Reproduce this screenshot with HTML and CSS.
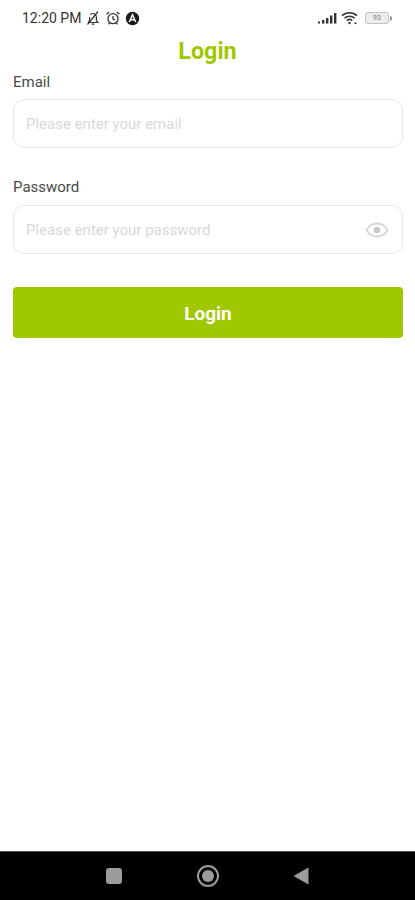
FILE: index.html
```html
<!DOCTYPE html>
<html lang="en">
<head>
<meta charset="utf-8">
<title>Login</title>
<link rel="stylesheet" href="styles.css">
</head>
<body>
<div class="screen">
  <div class="status">
    <div class="status-left">
      <span class="time">12:20 PM</span>
      <svg class="si" width="16" height="16" viewBox="0 0 16 16" fill="none" stroke="#333" stroke-width="1.2"><path d="M3 12.500h10l-1.600-2V7a3.500 3.500 0 0 0-6-2.400M4.600 7v3.500L3 12.500M6.700 14.200h2.600M2.500 14.500 13 1.500"/></svg>
      <svg class="si" width="16" height="16" viewBox="0 0 16 16" fill="none" stroke="#333" stroke-width="1.3"><circle cx="8" cy="8.700" r="5"/><path d="M8 6v3l2 1M1.600 4.300 4.200 2M14.400 4.300 11.800 2M4.500 13l-1 1.300M11.500 13l1 1.300"/></svg>
      <svg class="si" width="15" height="15" viewBox="0 0 15 15"><circle cx="7.500" cy="7.500" r="6.700" fill="#1c1c1c"/><path d="M4.300 11 7.500 3.800 10.700 11M5.600 8.800h3.800" fill="none" stroke="#fff" stroke-width="1.500"/></svg>
    </div>
    <div class="status-right">
      <svg width="19" height="12" viewBox="0 0 19 12" fill="#333"><rect x="0" y="9.500" width="2" height="2"/><rect x="4" y="8" width="2.400" height="3.500"/><rect x="8" y="6" width="2.400" height="5.500"/><rect x="12" y="3.500" width="2.400" height="8"/><rect x="16" y="1" width="2.400" height="10.500"/></svg>
      <svg class="wifi" width="18" height="14" viewBox="0 0 18 14" fill="none" stroke="#333" stroke-width="1.500"><path d="M1 4.600a11 11 0 0 1 15 0M3.400 7.200a7.600 7.600 0 0 1 10.200 0M5.800 9.600a4 4 0 0 1 5.400 0"/><circle cx="8.500" cy="12" r="1.200" fill="#333" stroke="none"/><circle cx="14.500" cy="12.300" r="1" fill="#333" stroke="none"/></svg>
      <div class="battery"><div class="battery-body">93</div><div class="battery-tip"></div></div>
    </div>
  </div>

  <h1 class="title">Login</h1>

  <form class="form">
    <div class="field">
      <label class="label">Email</label>
      <div class="input"><span class="placeholder">Please enter your email</span></div>
    </div>
    <div class="field">
      <label class="label">Password</label>
      <div class="input">
        <span class="placeholder">Please enter your password</span>
        <svg class="eye" width="24" height="24" viewBox="0 0 24 24" fill="none"><path d="M1.500 12C4 7.600 7.700 5.500 12 5.500s8 2.100 10.500 6.500c-2.500 4.400-6.200 6.500-10.500 6.500S4 16.400 1.500 12Z" stroke="#d6d6d6" stroke-width="1.800"/><circle cx="12" cy="12" r="3.300" fill="#c8c8c8"/></svg>
      </div>
    </div>
    <div class="button">Login</div>
  </form>

  <div class="spacer"></div>

  <div class="nav">
    <span class="nav-square"></span>
    <span class="nav-circle"><span class="nav-dot"></span></span>
    <svg width="16" height="18" viewBox="0 0 16 18"><path d="M15.500 0.500V17.500L0.500 9Z" fill="#9c9c9c"/></svg>
  </div>
</div>
</body>
</html>
```
FILE: styles.css
```css
* { box-sizing: border-box; }
html, body { margin: 0; padding: 0; background: #fff; }
body { font-family: Roboto, "Liberation Sans", sans-serif; }
.screen { width: 415px; height: 900px; display: flex; flex-direction: column; overflow: hidden; }
.status { height: 36px; flex: none; display: flex; justify-content: space-between; align-items: center; padding: 0 23px 0 22px; }
.status-left { display: flex; align-items: center; gap: 4px; }
.time { font-size: 14px; color: #333; }
.si { display: block; }
.status-right { display: flex; align-items: center; gap: 5px; }
.wifi { margin-left: -1px; margin-right: 1px; }
.battery { display: flex; align-items: center; }
.battery-body { width: 24px; height: 12px; border: 1px solid #c4c4c4; border-radius: 3px; font-size: 7px; line-height: 10px; color: #777; text-align: center; background: #ececec; }
.battery-tip { width: 2px; height: 5px; background: #999; margin-left: 1px; border-radius: 0 2px 2px 0; }
.title { margin: 0; height: 30px; flex: none; font-size: 23.300px; font-weight: 700; line-height: 30px; text-align: center; color: #a0c800; }
.form { flex: none; padding: 0 12px 0 13px; display: flex; flex-direction: column; }
.field { display: flex; flex-direction: column; margin-bottom: 24px; }
.field + .field { margin-bottom: 33px; }
.label { height: 33px; padding-top: 6px; font-size: 15px; line-height: 20px; color: #4a4a4a; }
.field + .field .label { padding-top: 5px; }
.input { height: 49px; border: 1.500px solid #e6e6e6; border-radius: 11px; display: flex; align-items: center; justify-content: space-between; padding: 1px 13px 0 12px; }
.placeholder { font-size: 15px; color: #d8d8d8; }
.eye { display: block; }
.button { height: 51px; padding-top: 1px; background: #a0c800; border-radius: 4px; display: flex; align-items: center; justify-content: center; color: #fff; font-size: 19px; font-weight: 700; }
.spacer { flex: 1; }
.nav { height: 49px; flex: none; background: #000; border-top: 1px solid #555; display: flex; align-items: center; justify-content: space-between; padding: 0 106px; }
.nav-square { width: 16px; height: 16px; border-radius: 3px; background: #9c9c9c; }
.nav-circle { width: 22px; height: 22px; border-radius: 50%; border: 2px solid #9c9c9c; display: flex; align-items: center; justify-content: center; }
.nav-dot { width: 12px; height: 12px; border-radius: 50%; background: #9c9c9c; }
```
